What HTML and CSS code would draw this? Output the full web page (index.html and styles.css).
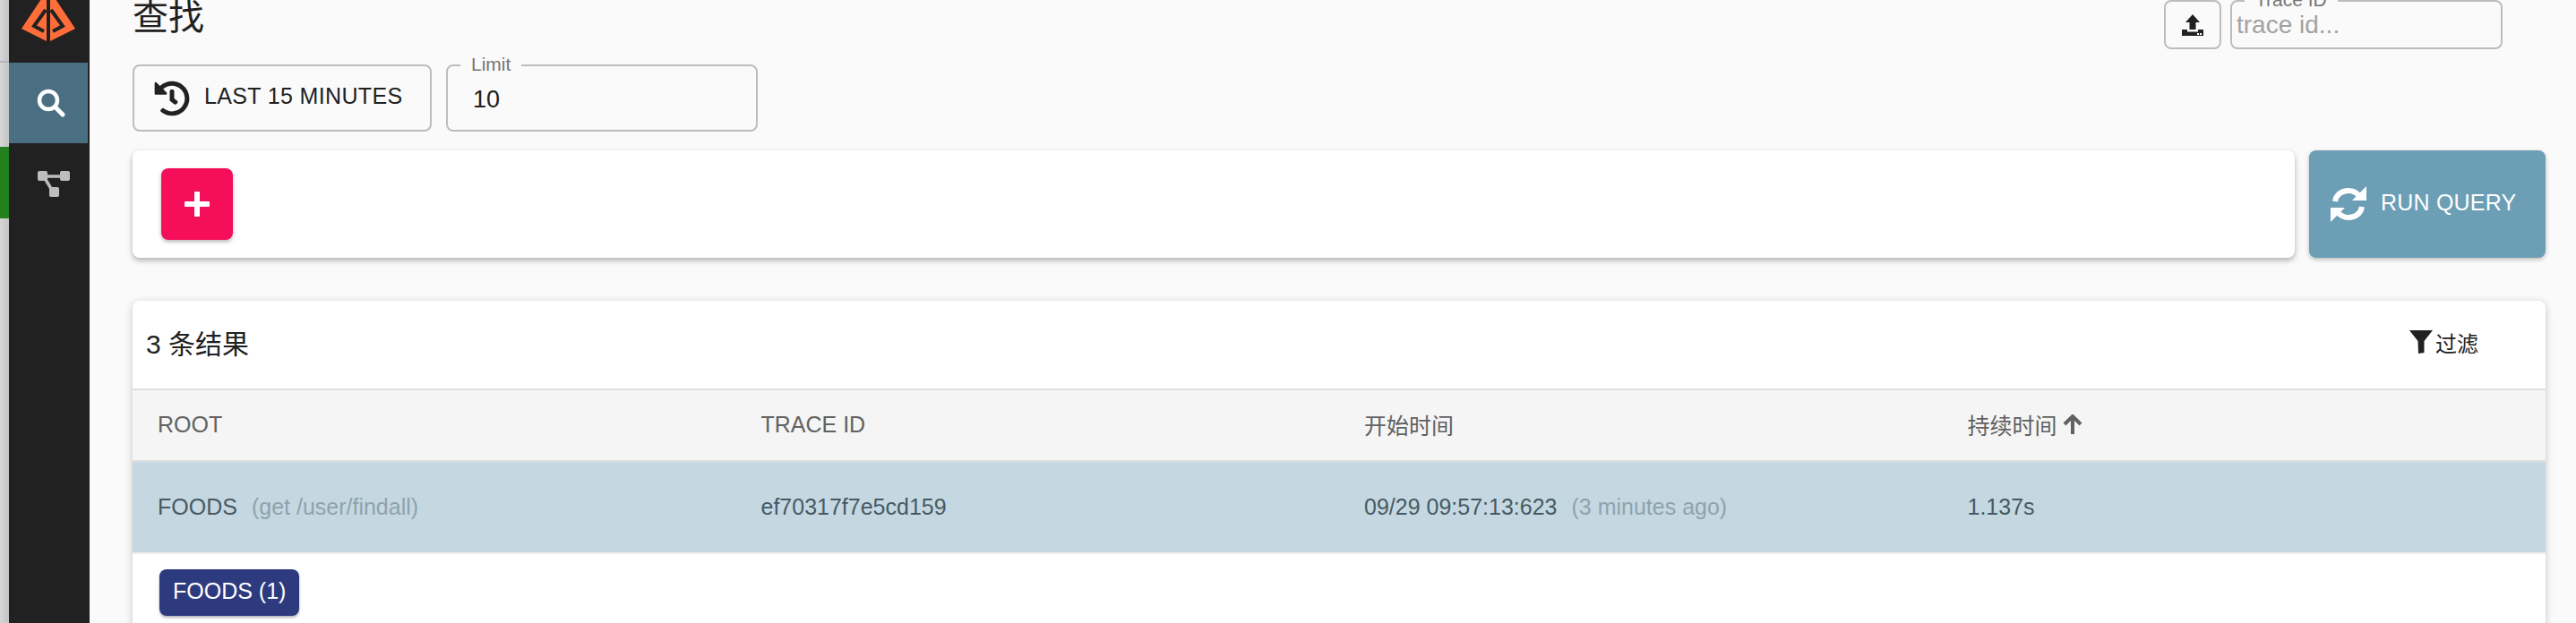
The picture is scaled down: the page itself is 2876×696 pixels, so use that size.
FILE: index.html
```html
<!DOCTYPE html>
<html lang="zh">
<head>
    <meta charset="UTF-8">
    <meta name="viewport" content="width=device-width, initial-scale=1.0">
    <title>查找</title>
    <link rel="stylesheet" href="styles.css">
</head>
<body>
    <div class="strip">
        <div class="strip-top"></div>
        <div class="strip-gap"></div>
        <div class="strip-green"></div>
        <div class="strip-rest"></div>
    </div>

    <nav class="sidebar">
        <div class="logo">
            <svg width="60" height="60" viewBox="0 0 60 60">
                <polygon points="28,4 0,46 28,60" fill="#ff6e3a"/>
                <polygon points="32,4 60,46 32,60" fill="#ff6e3a"/>
                <path d="M30 27V60" stroke="#212121" stroke-width="4" fill="none"/>
                <path d="M25 49 14 43 27 25M35 49 46 43 33 25" stroke="#212121" stroke-width="4" fill="none"/>
            </svg>
        </div>
        <div class="nav-item active">
            <svg width="32" height="32" viewBox="0 0 32 32">
                <circle cx="13" cy="13" r="10" stroke="#fff" stroke-width="4.500" fill="none"/>
                <path d="M21 21 29 29" stroke="#fff" stroke-width="5" stroke-linecap="round"/>
            </svg>
        </div>
        <div class="nav-item nav-topology">
            <svg width="36" height="29" viewBox="0 0 36 29">
                <path d="M6 6H30M8 8 17 23" stroke="#bdbdbd" stroke-width="3.500"/>
                <rect x="0" y="0" width="11" height="11" rx="2" fill="#bdbdbd"/>
                <rect x="25" y="0" width="11" height="11" rx="2" fill="#bdbdbd"/>
                <rect x="13" y="18" width="11" height="11" rx="2" fill="#bdbdbd"/>
            </svg>
        </div>
    </nav>

    <main class="main">
        <div class="page-head">
            <h1>查找</h1>
            <div class="trace-tools">
                <button class="upload-btn">
                    <svg width="24" height="24" viewBox="0 0 24 24">
                        <path d="M12 0 20 9H15.500V17H8.500V9H4Z" fill="#212121"/>
                        <path d="M0 17H6V19.500H18V17H24V24H0Z" fill="#212121"/>
                        <rect x="17" y="21" width="2" height="2" fill="#fff"/>
                        <rect x="20" y="21" width="2" height="2" fill="#fff"/>
                    </svg>
                </button>
                <div class="outlined trace-box">
                    <span class="float-label">Trace ID</span>
                    <span class="placeholder">trace id...</span>
                </div>
            </div>
        </div>

        <div class="filters">
            <button class="time-btn">
                <svg width="40" height="40" viewBox="0 0 512 512">
                    <path fill="#212121" d="M504 255.531c.253 136.64-111.18 248.372-247.82 248.468-59.015.042-113.223-20.53-155.822-54.911-11.077-8.94-11.905-25.541-1.839-35.607l11.267-11.267c8.609-8.609 22.353-9.551 31.891-1.984C173.062 425.135 212.781 440 256 440c101.705 0 184-82.311 184-184 0-101.705-82.311-184-184-184-48.814 0-93.149 18.969-126.068 49.932l50.754 50.754c10.08 10.08 2.941 27.314-11.313 27.314H24c-8.837 0-16-7.163-16-16V38.627c0-14.254 17.234-21.393 27.314-11.314l49.372 49.372C129.209 34.136 189.552 8 256 8c136.81 0 247.747 110.78 248 247.531zm-180.912 78.784l9.823-12.63c8.138-10.463 6.253-25.542-4.21-33.679L288 256.349V152c0-13.255-10.745-24-24-24h-16c-13.255 0-24 10.745-24 24v135.651l65.409 50.874c10.463 8.137 25.541 6.253 33.679-4.21z"/>
                </svg>
                <span class="btn-text">LAST 15 MINUTES</span>
            </button>
            <div class="outlined limit-box">
                <span class="float-label">Limit</span>
                <span class="limit-value">10</span>
            </div>
        </div>

        <div class="query-row">
            <div class="query-card">
                <button class="add-btn"><span class="plus"></span></button>
            </div>
            <button class="run-btn">
                <svg width="40" height="40" viewBox="0 0 40 40">
                    <path d="M5 17C6 10 12 5 20 5 25 5 29 7 32 11M35 23C34 30 28 35 20 35 15 35 11 33 8 29" stroke="#fff" stroke-width="6" fill="none"/>
                    <polygon points="40,0 40,16 24,16" fill="#fff"/>
                    <polygon points="0,40 0,24 16,24" fill="#fff"/>
                </svg>
                <span class="btn-text">RUN QUERY</span>
            </button>
        </div>

        <section class="results">
            <div class="results-head">
                <span class="results-count">3 条结果</span>
                <button class="filter-btn">
                    <svg width="26" height="26" viewBox="0 0 26 26">
                        <path d="M0 0H26L16.500 12V25L10 26 9.500 12Z" fill="#212121"/>
                    </svg>
                    <span>过滤</span>
                </button>
            </div>
            <div class="table-row table-head">
                <div>ROOT</div>
                <div>TRACE ID</div>
                <div>开始时间</div>
                <div class="sort-col">持续时间
                    <svg width="22" height="22" viewBox="0 0 22 22">
                        <path d="M11 2V22M2 11 11 2 20 11" stroke="#616161" stroke-width="4" fill="none"/>
                    </svg>
                </div>
            </div>
            <div class="table-row trace-row">
                <div>FOODS<span class="muted">(get /user/findall)</span></div>
                <div>ef70317f7e5cd159</div>
                <div>09/29 09:57:13:623<span class="muted">(3 minutes ago)</span></div>
                <div>1.137s</div>
            </div>
            <div class="service-tags">
                <span class="tag">FOODS (1)</span>
            </div>
        </section>
    </main>
</body>
</html>
```

FILE: styles.css
```css
body {
    margin: 0;
    height: 696px;
    overflow: hidden;
    display: flex;
    background: #fafafa;
    font-family: "Liberation Sans", "Noto Sans CJK SC", sans-serif;
    color: #212121;
}

button {
    font-family: inherit;
    cursor: pointer;
}

.strip {
    width: 10px;
    flex-shrink: 0;
    display: flex;
    flex-direction: column;
    background: linear-gradient(to right, #d6d6d6, #c4c4c4);
}

.strip-top {
    height: 68px;
    border-bottom: 2px solid #b4b4bc;
}

.strip-gap {
    height: 94px;
}

.strip-green {
    height: 80px;
    background: #23801f;
}

.strip-rest {
    flex: 1;
}

.sidebar {
    width: 90px;
    flex-shrink: 0;
    background: #212121;
}

.logo {
    display: flex;
    height: 70px;
    padding-left: 14px;
    box-sizing: border-box;
}

.logo svg {
    margin-top: -14px;
}

.nav-item {
    width: 88px;
    height: 90px;
    display: flex;
    align-items: center;
    justify-content: center;
    padding-left: 6px;
    box-sizing: border-box;
}

.nav-item.active {
    background: #4a6f82;
}

.nav-topology {
    padding-left: 12px;
}

.main {
    flex: 1;
    min-width: 0;
    padding: 0 34px 0 48px;
}

.page-head {
    display: flex;
    justify-content: space-between;
    height: 55px;
    margin-bottom: 17px;
}

.page-head h1 {
    margin: -6px 0 0;
    font-size: 40px;
    font-weight: 400;
    line-height: 50px;
}

.trace-tools {
    display: flex;
    gap: 10px;
    margin-right: 48px;
}

.outlined {
    position: relative;
    display: flex;
    align-items: center;
    box-sizing: border-box;
    border: 2px solid #bdbdbd;
    border-radius: 8px;
}

.float-label {
    position: absolute;
    left: 14px;
    top: -13px;
    padding: 0 12px;
    font-size: 21px;
    line-height: 22px;
    color: #757575;
    background: #fafafa;
}

.upload-btn {
    width: 64px;
    height: 55px;
    padding: 0;
    display: flex;
    align-items: center;
    justify-content: center;
    background: transparent;
    border: 2px solid #bdbdbd;
    border-radius: 8px;
}

.trace-box {
    width: 304px;
    height: 55px;
    padding-left: 5px;
}

.placeholder {
    font-size: 28px;
    color: #a2a2a2;
}

.filters {
    display: flex;
    gap: 16px;
    margin-bottom: 21px;
}

.time-btn {
    width: 334px;
    height: 75px;
    padding: 0 0 0 22px;
    display: flex;
    align-items: center;
    gap: 16px;
    background: transparent;
    border: 2px solid #bdbdbd;
    border-radius: 8px;
    font-size: 25px;
    letter-spacing: 0.350px;
    color: #212121;
}

.btn-text {
    padding-bottom: 4px;
}

.limit-box {
    width: 348px;
    height: 75px;
    padding: 4px 0 0 28px;
}

.limit-value {
    font-size: 27px;
}

.query-row {
    display: flex;
    gap: 16px;
    margin-bottom: 48px;
}

.query-card {
    flex: 1;
    height: 120px;
    padding: 20px 32px;
    box-sizing: border-box;
    background: #fff;
    border-radius: 8px;
    box-shadow: 0 3px 6px rgba(0, 0, 0, 0.3);
}

.add-btn {
    width: 80px;
    height: 80px;
    padding: 0;
    display: flex;
    align-items: center;
    justify-content: center;
    background: #f50f5b;
    border: none;
    border-radius: 8px;
    box-shadow: 0 2px 4px rgba(0, 0, 0, 0.3);
}

.plus {
    position: relative;
    width: 28px;
    height: 6px;
    border-radius: 1px;
    background: #fff;
}

.plus::after {
    content: "";
    position: absolute;
    left: 11px;
    top: -11px;
    width: 6px;
    height: 28px;
    border-radius: 1px;
    background: #fff;
}

.run-btn {
    width: 264px;
    height: 120px;
    padding: 0 0 0 24px;
    display: flex;
    align-items: center;
    gap: 16px;
    background: #6c9eb5;
    border: none;
    border-radius: 8px;
    box-shadow: 0 2px 5px rgba(0, 0, 0, 0.25);
    font-size: 25px;
    letter-spacing: 0.200px;
    color: #fff;
}

.results {
    height: 500px;
    background: #fff;
    border-radius: 8px 8px 0 0;
    box-shadow: 0 2px 8px rgba(0, 0, 0, 0.22);
}

.results-head {
    height: 92px;
    display: flex;
    align-items: center;
    justify-content: space-between;
    padding: 0 75px 6px 15px;
    border-bottom: 2px solid #e0e0e0;
}

.results-count {
    font-size: 30px;
}

.filter-btn {
    display: flex;
    align-items: center;
    gap: 3px;
    padding: 0;
    background: none;
    border: none;
    font-size: 24px;
    color: #212121;
}

.table-row {
    display: grid;
    grid-template-columns: repeat(4, 1fr);
    align-items: center;
    font-size: 25px;
}

.table-row > div {
    padding-left: 28px;
}

.table-head {
    height: 76px;
    padding-bottom: 2px;
    background: #f5f5f5;
    color: #616161;
    border-bottom: 2px solid #e0e0e0;
}

.sort-col {
    display: flex;
    align-items: center;
    gap: 6px;
}

.trace-row {
    height: 101px;
    background: #c5d8e1;
    color: #455a64;
    border-bottom: 2px solid #eeeeee;
}

.muted {
    margin-left: 16px;
    color: #8ea3ae;
}

.service-tags {
    padding: 17px 30px;
}

.tag {
    display: inline-block;
    height: 52px;
    padding: 0 15px;
    line-height: 48px;
    font-size: 25px;
    color: #fff;
    background: #2d3a7e;
    border-radius: 8px;
    box-shadow: 0 2px 3px rgba(0, 0, 0, 0.3);
}
```
